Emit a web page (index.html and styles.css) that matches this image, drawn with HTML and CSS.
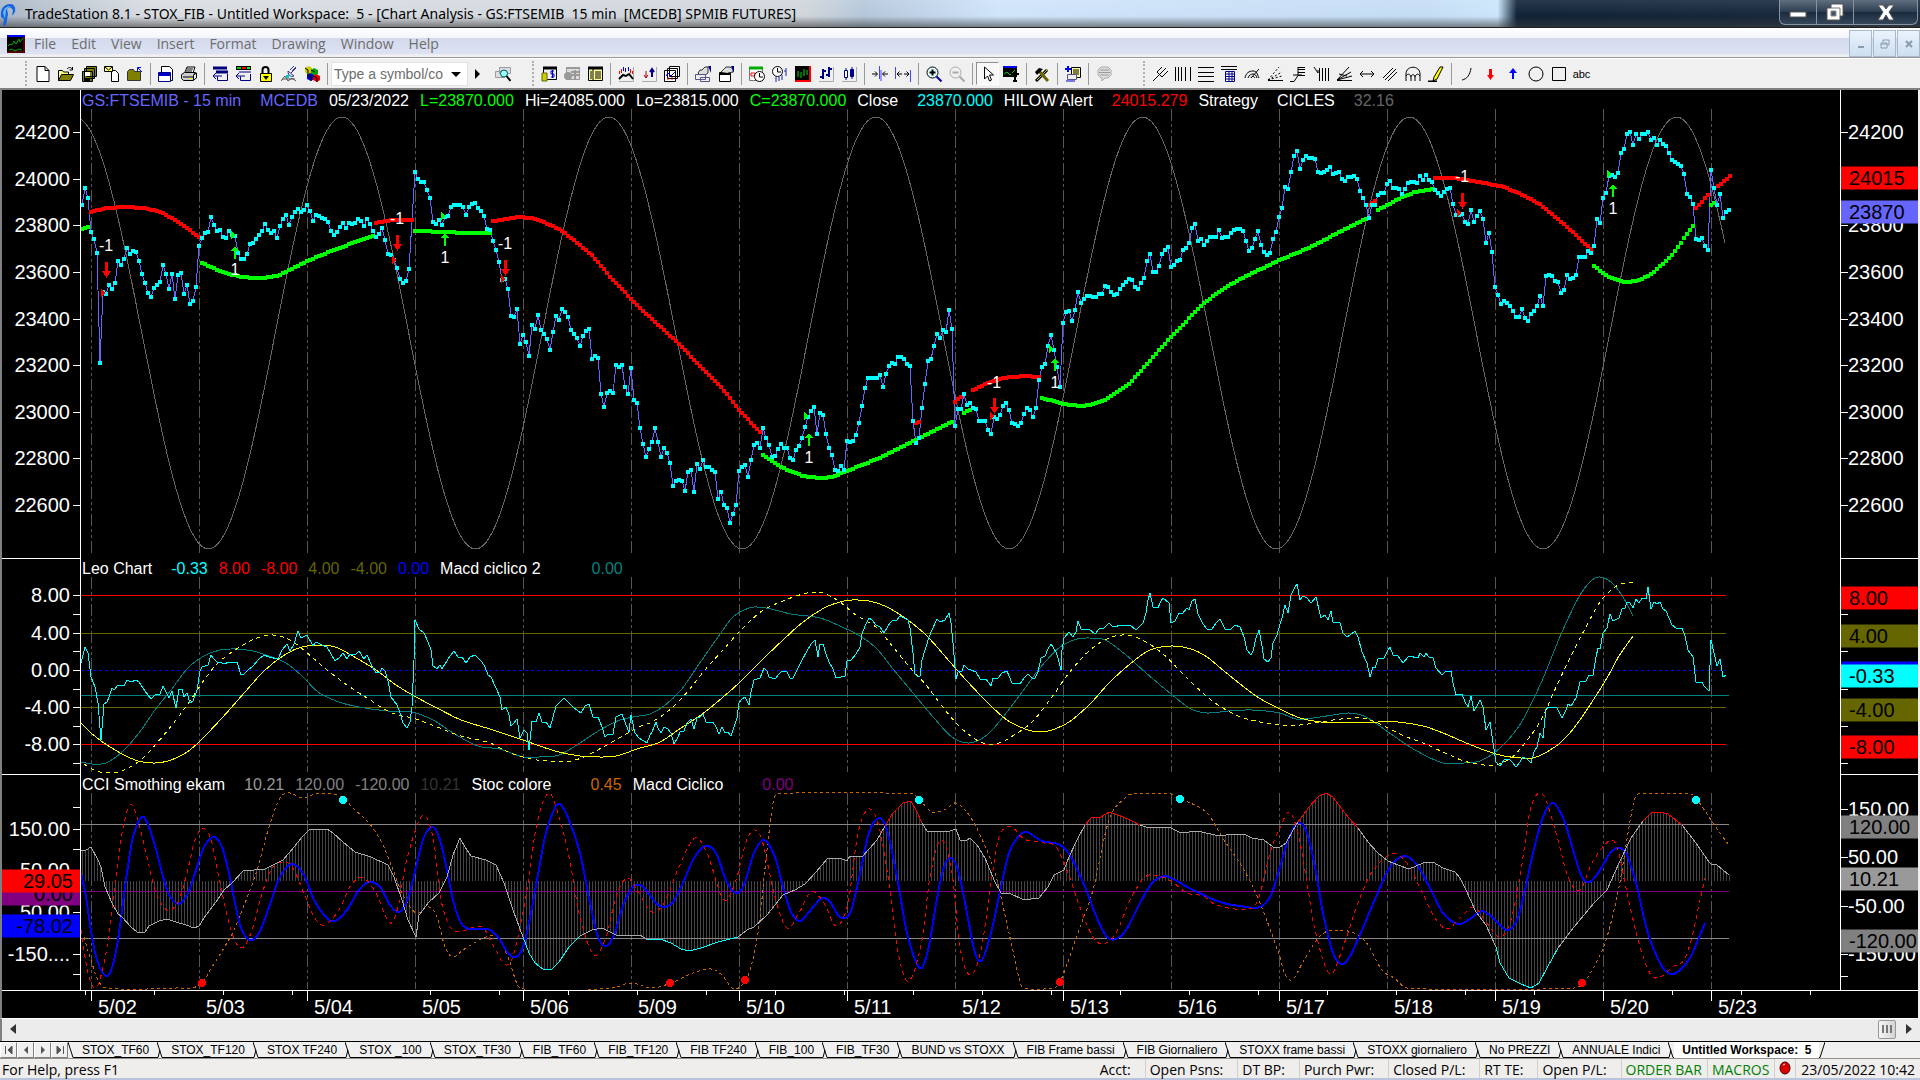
FILE: index.html
```html
<!DOCTYPE html>
<html lang="en">
<head>
    <meta charset="UTF-8">
    <meta name="viewport" content="width=device-width, initial-scale=1.0">
    <title>TradeStation 8.1 - STOX_FIB</title>
    <link rel="stylesheet" href="styles.css">
</head>
<body>
    <header class="titlebar">
        <svg class="app-logo" viewBox="0 0 16 24"><path d="M1 15C0 7 4 2 10 2c4 0 6 3 5 8l-3 4 1-6-3-3-3 2 1 5-2 11-3 1 1-7z" fill="#1464e0"/><path d="M3 11c1-5 4-7 7-7l-4 4-1 9z" fill="#6db4ff"/></svg>
        <h1>TradeStation 8.1 - STOX_FIB - Untitled Workspace:&nbsp; 5 - [Chart Analysis - GS:FTSEMIB&nbsp; 15 min&nbsp; [MCEDB] SPMIB FUTURES]</h1>
        <div class="window-buttons">
            <button aria-label="Minimize"><svg width="18" height="16"><rect x="1" y="8" width="16" height="5" fill="#fff" stroke="#555"/></svg></button>
            <button aria-label="Restore"><svg width="20" height="18"><path d="M6 1h12v12h-3v4H2V5h4z" fill="#fff" stroke="#555"/><path d="M6 5h9v8" fill="none" stroke="#777"/><path d="M6 8h5v5H6z" fill="#456" stroke="#888"/></svg></button>
            <button class="close" aria-label="Close"><svg width="20" height="17"><path d="M2 1h5l3 4 3-4h5l-5 7 5 8h-5l-3-5-3 5H2l5-8z" fill="#fff" stroke="#555"/></svg></button>
        </div>
    </header>

    <nav class="menubar">
        <svg class="doc-icon" viewBox="0 0 18 18"><path d="M0 0h18v18H0z"/><path d="M0 0h18v2H0z" fill="#00f"/><path d="M17 2v15H0" fill="none" stroke="#a00"/><path d="M1 11l2-2 2 1 2-4 2 3 3-5 1 3 3-4M2 15l3-1 3 2 4-2 3 1" fill="none" stroke="#0a0"/></svg>
        <a href="#">File</a>
        <a href="#">Edit</a>
        <a href="#">View</a>
        <a href="#">Insert</a>
        <a href="#">Format</a>
        <a href="#">Drawing</a>
        <a href="#">Window</a>
        <a href="#">Help</a>
        <div class="mdi-buttons">
            <button aria-label="Minimize chart"><svg width="12" height="12"><path d="M3 8h6v2H3z" fill="#8a9bb0"/></svg></button>
            <button aria-label="Restore chart"><svg width="12" height="12"><path d="M4 4V2h6v5H8M2 5h6v5H2zM2 6h6" fill="none" stroke="#8a9bb0"/></svg></button>
            <button aria-label="Close chart"><svg width="12" height="12"><path d="M3 3l6 6M9 3l-6 6" stroke="#8a9bb0" stroke-width="2"/></svg></button>
        </div>
    </nav>

    <div class="toolbar">
        <div class="tool-group">
            <button aria-label="New"><svg viewBox="0 0 16 16"><path d="M2 .5h8l4 4v11H2zM10 .5v4h4" fill="#fff" stroke="#000"/></svg></button>
            <button aria-label="Open"><svg viewBox="0 0 16 16"><path d="M.5 14.500v-10h4l1 1.500h5v2" fill="#ffff80" stroke="#000"/><path d="M.5 14.500l3-6h12l-3 6z" fill="#808000" stroke="#000"/><path d="M9 3c2-2 4-2 5 0M14.500 1v3h-3" fill="none" stroke="#000"/></svg></button>
            <button aria-label="Save all"><svg viewBox="0 0 16 16"><path d="M5.500.5h10v10h-10zM3.500 2.500h10v10h-10zM1.500 5.500h10v10h-10z" fill="#808000" stroke="#000"/><path d="M4 6h5v4H4z" fill="#fff"/><path d="M3 12h6v3H3z"/></svg></button>
            <button aria-label="Send page"><svg viewBox="0 0 16 16"><path d="M7.500 4.500h4l3 3v8h-7z" fill="#fff" stroke="#000"/><path d="M.5.5h8v5h-8z" fill="#ffff80" stroke="#000"/><path d="M1 1l3.500 3L8 1" fill="none" stroke="#000"/></svg></button>
            <button aria-label="Close workspace"><svg viewBox="0 0 16 16"><path d="M.5 14.500v-9l2-2h4l1 2h6v9z" fill="#808000" stroke="#333"/><path d="M15 6l-4-4M10.500 5V1.500H14" fill="none" stroke="#00f"/></svg></button>
            <i class="sep"></i>
            <button aria-label="Window"><svg viewBox="0 0 16 16"><path d="M3.500.5h8l3 3v11h-11z" fill="#fff" stroke="#000"/><path d="M.5 6.500h12v9H.5z" fill="#fff" stroke="#008"/><path d="M1 7h11v3H1z" fill="#00c"/></svg></button>
            <button aria-label="Print"><svg viewBox="0 0 16 16"><path d="M4 6l2-5h8l-2 6" fill="#fff" stroke="#000"/><path d="M6 3h6M5 5h6" stroke="#000"/><path d="M.5 8.500l3-2h11l-2 3v5h-10l-2-2z" fill="#ccc" stroke="#000"/><path d="M2 11h10M12.500 9l3-2v5l-3 2" fill="none" stroke="#000"/><path d="M8 12h3v1H8z" fill="#ff0"/></svg></button>
            <i class="sep"></i>
            <button aria-label="Insert indicator"><svg viewBox="0 0 16 16"><path d="M1 2h14M4 6h12" stroke="#000080" stroke-width="3"/><path d="M15.500 8v6.500h-10v-4M1 10h9M4 7l-3 3 3 3" fill="none" stroke="#000080"/></svg></button>
            <button aria-label="Insert strategy"><svg viewBox="0 0 16 16"><path d="M1 2h15" stroke="#000" stroke-width="4"/><path d="M2 2h4" stroke="#0c0" stroke-width="2"/><path d="M7 2h4" stroke="red" stroke-width="2"/><path d="M12 2h3" stroke="#0f0" stroke-width="2"/><path d="M4 6h12M15.500 8v6.500h-10v-4M1 10h9M4 7l-3 3 3 3" fill="none" stroke="#000080"/></svg></button>
            <button aria-label="Lock"><svg viewBox="0 0 16 16"><path d="M4.500 8V4c0-4 6-4 6 0v4" fill="none" stroke="#000" stroke-width="2"/><path d="M2.500 7.500h11v8h-11z" fill="#ff0" stroke="#000"/><path d="M5 10h6l-3 4z"/></svg></button>
            <button aria-label="Satellite"><svg viewBox="0 0 16 16"><path d="M7 5c0 5 3 6 6 5zM9 4l4-4M11 5l4-4M10 7l5-5" fill="none" stroke="#339"/><path d="M0 15l4-5 3 5M7 15l4-3 4 3M1 13h13" fill="none" stroke="#555"/><path d="M5 9h3v3H5z" fill="#0cc"/></svg></button>
            <button aria-label="Cubes"><svg viewBox="0 0 16 16"><path d="M1 2l4-2 3 2v5L4 9 1 6z" fill="#cc0"/><path d="M7 4l3-2 4 2v4l-3 2-4-2z" fill="#0a0"/><path d="M3 9l3-2 4 2v4l-3 2-4-2z" fill="#00c"/><path d="M9 10l3-2 4 2v4l-3 2-4-2z" fill="#e00"/><path d="M1 2l3 2v5M3 9l4 2v4M9 10l4 2v4M7 4l4 2" fill="none" stroke="#000"/></svg></button>
            <i class="sep"></i>
            <div class="symbol-box">
                <input type="text" aria-label="Symbol" value="Type a symbol/co">
                <button aria-label="Symbol list"><svg viewBox="0 0 16 16"><path d="M3 6h10l-5 5z"/></svg></button>
            </div>
            <button class="go" aria-label="Go"><svg viewBox="0 0 16 16"><path d="M5 3l5 5-5 5z"/></svg></button>
            <button class="find" aria-label="Find symbol"><svg viewBox="0 0 16 16"><path d="M.5 5.500h9v6h-9zM4.500 1.500h11v6h-11z" fill="#ddd" stroke="#99a"/><circle cx="9" cy="7.500" r="3.500" fill="#9ff" stroke="#055"/><path d="M11.500 10l4 5" stroke="#000" stroke-width="2"/></svg></button>
        </div>
        <div class="tool-group second">
            <button aria-label="Account"><svg viewBox="0 0 16 16"><path d="M2.500 1.500h13v12h-13z" fill="#eee" stroke="#000"/><path d="M2 2h14" stroke="#000" stroke-width="3"/><path d="M13 5h-3v3h3v3h-3M11.500 4v8" fill="none" stroke="#00c"/><path d="M1 7h5v8H1z" fill="#cc0" stroke="#660"/></svg></button>
            <button aria-label="Order"><svg viewBox="0 0 16 16"><path d="M2.500 1.500h13v12h-13z" fill="#ddd" stroke="#999"/><path d="M2 2h14M7 6h8M7 9h8M11 4v9" stroke="#999" stroke-width="2"/><circle cx="4" cy="10" r="4" fill="#999"/></svg></button>
            <button aria-label="Grid"><svg viewBox="0 0 16 16"><path d="M1.500 1.500h14v13h-14z" fill="#ff9" stroke="#000"/><path d="M1 2h15" stroke="#000" stroke-width="3"/><path d="M6 3v12M3 6h2M3 8h2M3 10h2M3 12h2M8 6h6M8 8h6M8 10h6M8 12h6" stroke="#000"/></svg></button>
            <i class="sep"></i>
            <button aria-label="Indicator"><svg viewBox="0 0 16 16"><path d="M15.500 1v14.500H1" fill="none" stroke="#aaa"/><path d="M1 13l4-4 3 1 3-2 4 5" fill="none" stroke="#000" stroke-width="2"/><path d="M1.500 5v3M3.500 3v4M12.500 3v4M14.500 5v3" stroke="red"/><path d="M5.500 1v4M7.500 2v4M10.500 1v4" stroke="#00f"/></svg></button>
            <button aria-label="Signals"><svg viewBox="0 0 16 16"><path d="M15.500 1v14.500H1" fill="none" stroke="#aaa"/><path d="M5 5v7M3 9l2 3 2-3" fill="none" stroke="#a00" stroke-width="1"/><path d="M11 11V3M9 6l2-3 2 3" fill="none" stroke="#008" stroke-width="2"/></svg></button>
            <button aria-label="Analysis"><svg viewBox="0 0 16 16"><path d="M5.500.5h10v10h-10zM3.500 2.500h10v10h-10zM.5 4.500h11v11H.5z" fill="#fff" stroke="#000"/><path d="M2 10l2-3 3 3 4-4" fill="none" stroke="#00f"/><path d="M4 11v3M8 11v3" stroke="red"/></svg></button>
            <i class="sep"></i>
            <button aria-label="Format"><svg viewBox="0 0 16 16"><path d="M3 7l2-3h2l3-3h3v6l-3 2H5z" fill="#ddd" stroke="#333"/><path d="M13 0h3v7z" fill="#008"/><path d="M.5 8.500h10v5H.5zM5.500 11.500h9v4h-9z" fill="#eee" stroke="#558"/></svg></button>
            <button aria-label="Properties"><svg viewBox="0 0 16 16"><path d="M1.500 6.500h11v9h-11z" fill="#fff" stroke="#000"/><path d="M1 7h12v2H1z"/><path d="M3 6l5-5h4l3 2v3l-5 1" fill="#ddd" stroke="#333"/><path d="M13 0h3v7z" fill="#008"/></svg></button>
            <i class="sep"></i>
            <button aria-label="Calendar"><svg viewBox="0 0 16 16"><path d="M.5 2.500h13v12H.5z" fill="#fff" stroke="#777"/><path d="M0 2h14" stroke="#0a0" stroke-width="3"/><path d="M2 7h4v3H2z" fill="none" stroke="red"/><circle cx="10.500" cy="10.500" r="5" fill="#fff" stroke="#000"/><path d="M10.500 7v4H14" fill="none" stroke="#000"/></svg></button>
            <button aria-label="Interval"><svg viewBox="0 0 16 16"><circle cx="5.500" cy="5.500" r="5" fill="#fff" stroke="#000"/><path d="M5.500 2v4H9" fill="none" stroke="#000"/><path d="M4 11v5M7 11v4M10 9v5M14 2v8M12 5h2" stroke="#22a"/></svg></button>
            <button aria-label="Chart colours"><svg viewBox="0 0 16 16"><path d="M0 0h16v16H0z"/><path d="M0 15h15V0" fill="none" stroke="red" stroke-width="2"/><path d="M3 5v6M6 6v6M9 3v7M12 4v5" stroke="#0d0"/></svg></button>
            <button aria-label="Bar chart"><svg viewBox="0 0 16 16"><path d="M15.500 1v14.500H1" fill="none" stroke="#aaa"/><path d="M5 3v10M2 11h3M5 5h3M11 1v10M8 9h3M11 3h3" stroke="#000080" stroke-width="2"/></svg></button>
            <button aria-label="Candlestick"><svg viewBox="0 0 16 16"><path d="M15.500 1v14.500H1" fill="none" stroke="#aaa"/><path d="M3.500 4.500h3v7h-3z" fill="#fff" stroke="#008"/><path d="M9.500 3.500h3v7h-3z" fill="#008" stroke="#008"/><path d="M5 2v2M11 1v12M5 12v2" stroke="#008"/></svg></button>
            <i class="sep"></i>
            <button aria-label="Narrow bars"><svg viewBox="0 0 16 16"><path d="M0 8h5M3 5.500L5.500 8 3 10.500M16 8h-5M13 5.500L10.500 8l2.500 2.500" fill="none" stroke="#000"/><path d="M7.500 0v13M9 4v11" stroke="#44f"/></svg></button>
            <button aria-label="Widen bars"><svg viewBox="0 0 16 16"><path d="M2 8h5M4.500 5.500L2 8l2.500 2.500M9 8h5M11.500 5.500L14 8l-2.500 2.500" fill="none" stroke="#000"/><path d="M.5 1v12M15.500 4v12" stroke="#44f"/></svg></button>
            <i class="sep"></i>
            <button aria-label="Zoom in"><svg viewBox="0 0 16 16"><circle cx="6.500" cy="6.500" r="5.500" fill="#dff" stroke="#000"/><path d="M3.500 6.500h6M6.500 3.500v6" stroke="#000" stroke-width="2"/><path d="M10.500 10.500l5 5" stroke="#00a" stroke-width="2"/></svg></button>
            <button aria-label="Zoom out"><svg viewBox="0 0 16 16"><circle cx="6.500" cy="6.500" r="5.500" fill="none" stroke="#aaa"/><path d="M3.500 6.500h6M10.500 10.500l5 5" stroke="#aaa" stroke-width="2"/></svg></button>
            <i class="sep"></i>
            <button class="pressed" aria-label="Pointer"><svg viewBox="0 0 16 16"><path d="M4.500 1v12l3-3 2 5 2-1-2-5h4z" fill="#fff" stroke="#000"/></svg></button>
            <button aria-label="Text tool"><svg viewBox="0 0 16 16"><path d="M0 0h14v11H0z"/><path d="M0 1h14" stroke="#00f" stroke-width="2"/><path d="M1 8l3-2 3 3 5-5" fill="none" stroke="#0c0"/><path d="M8 8h8M12 8v8M10 15h4" stroke="#000" stroke-width="2"/></svg></button>
            <i class="sep"></i>
            <button aria-label="Tools"><svg viewBox="0 0 16 16"><path d="M2 15L13 4" stroke="#000" stroke-width="3"/><path d="M3 14L14 3" stroke="#cc0"/><path d="M5 5l9 10" stroke="#660" stroke-width="3"/><path d="M1 6l4-4 4 1-4 4-2 2z"/></svg></button>
            <i class="sep"></i>
            <button aria-label="Add window"><svg viewBox="0 0 16 16"><path d="M6.500 1.500h9v10h-9z" fill="#ff9" stroke="#000"/><path d="M8 4h6M8 6h6M8 8h6" stroke="#000"/><path d="M2.500 8.500h9v5h-9z" fill="#eee" stroke="#558"/><path d="M3 0v6M0 3h6" stroke="#00f" stroke-width="2"/><path d="M1 15h9" stroke="#00c"/></svg></button>
            <i class="sep"></i>
            <button aria-label="Comment"><svg viewBox="0 0 16 16"><path d="M5 1h7l3 3v5l-3 3H9l-3 3v-3H5L2 9V4z" fill="#ddd" stroke="#aaa"/><path d="M4 4h9M3 6.500h11M4 9h9" stroke="#999"/></svg></button>
        </div>
        <div class="tool-group third">
            <button aria-label="Andrews pitchfork"><svg viewBox="0 0 16 16"><path d="M1 15l6-6M5 6l5 5M5 6l5-5M7.500 8.500L14 2M10 11l6-6" fill="none" stroke="#000"/></svg></button>
            <button aria-label="Vertical cycles"><svg viewBox="0 0 16 16"><path d="M.5 1v14M3.500 1v14M6.500 1v14M10.500 1v14M15.500 1v14" stroke="#000"/></svg></button>
            <button aria-label="Horizontal lines"><svg viewBox="0 0 16 16"><path d="M0 1.500h16M0 6.500h16M0 10.500h16M0 15.500h16" stroke="#000"/></svg></button>
            <button aria-label="Retracement"><svg viewBox="0 0 16 16"><path d="M0 .5h16M0 3.500h16" stroke="#000"/><path d="M4.500 5.500h9v10h-9z" fill="#fff" stroke="#008"/><path d="M5 8h8M5 10.500h8M5 13h8M8 6v9M11 6v9" stroke="#008"/></svg></button>
            <button aria-label="Speed arcs"><svg viewBox="0 0 16 16"><path d="M1 12c1-5 4-7 8-7s4 3 6 7M4 12c1-3 3-4 5-4s3 1 4 4M7 12c1-2 3-2 4 0M7 12l8-9" fill="none" stroke="#000"/></svg></button>
            <button aria-label="Speed fan"><svg viewBox="0 0 16 16"><path d="M1 14.500h15" stroke="#000"/><path d="M1 14L12 1M1 14l14-8M1 14l14-4" stroke="#000" stroke-dasharray="2 2"/></svg></button>
            <button aria-label="Extension"><svg viewBox="0 0 16 16"><path d="M0 15.500h4l4-6V1M3 9h9M8 1.500h7M8 3.500h7M8 6.500h7M8 9.500h7" fill="none" stroke="#000"/></svg></button>
            <button aria-label="Time extension"><svg viewBox="0 0 16 16"><path d="M1 1l4 6M5 7V4M6.500 2v13M9.500 2v13M12.500 2v13M15.500 2v13" stroke="#000"/></svg></button>
            <button aria-label="Gann fan"><svg viewBox="0 0 16 16"><path d="M1 14.500h15M1 14L13 1M1 14l14-8M1 14l15-4M3 8l8 2" fill="none" stroke="#000"/></svg></button>
            <button aria-label="Horizontal extend"><svg viewBox="0 0 16 16"><path d="M1 8h14M4 5L1 8l3 3M12 5l3 3-3 3" fill="none" stroke="#000"/></svg></button>
            <button aria-label="Parallel lines"><svg viewBox="0 0 16 16"><path d="M1 12L11 2M3 14L14 3M6 15l9-9" stroke="#000"/></svg></button>
            <button aria-label="Arcs"><svg viewBox="0 0 16 16"><path d="M1 15V8c0-9 14-9 14 0v7M1 10c2-3 4-2 5 1 0-3 4-3 4 0 1-3 3-4 5-1M6 11v4M10 11v4" fill="none" stroke="#000"/></svg></button>
            <button aria-label="Pencil"><svg viewBox="0 0 16 16"><path d="M6 11l6-10h3L9 13l-4 2z" fill="#ff0" stroke="#000"/><path d="M0 15.500h9" stroke="#000" stroke-width="2"/></svg></button>
            <i class="sep"></i>
            <button aria-label="Curve"><svg viewBox="0 0 16 16"><path d="M3 14c5-1 8-5 9-12" fill="none" stroke="#000"/></svg></button>
            <button aria-label="Down arrow"><svg viewBox="0 0 16 16"><path d="M7 3h3v6h2l-3.500 5L5 9h2z" fill="red"/></svg></button>
            <button aria-label="Up arrow"><svg viewBox="0 0 16 16"><path d="M7 13h2V7h3L8 2 4 7h3z" fill="#00f"/></svg></button>
            <button aria-label="Ellipse"><svg viewBox="0 0 16 16"><circle cx="8" cy="8" r="7" fill="none" stroke="#000"/></svg></button>
            <button aria-label="Rectangle"><svg viewBox="0 0 16 16"><path d="M1.500 1.500h13v13h-13z" fill="none" stroke="#000"/></svg></button>
            <button class="abc">abc</button>
        </div>
    </div>

    <main class="chart">
        <div class="axis left" id="left1"></div>
        <section class="plot">
            <svg id="plot1" viewBox="81 90 1759 469" preserveAspectRatio="none"></svg>
            <div class="legend first">
                <span class="violet">GS:FTSEMIB - 15 min</span>
                <span class="violet val">MCEDB</span>
                <span>05/23/2022</span>
                <span class="lime">L=23870.000</span>
                <span>Hi=24085.000</span>
                <span>Lo=23815.000</span>
                <span class="lime">C=23870.000</span>
                <span>Close</span>
                <span class="cyan val">23870.000</span>
                <span>HILOW Alert</span>
                <span class="red val">24015.279</span>
                <span>Strategy</span>
                <span class="val">CICLES</span>
                <span class="dim val">32.16</span>
            </div>
            <div class="notes" id="notes"></div>
        </section>
        <div class="axis right" id="right1"></div>

        <div class="axis left" id="left2"></div>
        <section class="plot">
            <svg id="plot2" viewBox="81 559 1759 216" preserveAspectRatio="none"></svg>
            <div class="legend">
                <span>Leo Chart</span>
                <span class="cyan val">-0.33</span>
                <span class="red">8.00</span>
                <span class="red">-8.00</span>
                <span class="olive">4.00</span>
                <span class="olive">-4.00</span>
                <span class="blue">0.00</span>
                <span>Macd ciclico 2</span>
                <span class="teal farther">0.00</span>
            </div>
        </section>
        <div class="axis right" id="right2"></div>

        <div class="axis left last" id="left3"></div>
        <section class="plot">
            <svg id="plot3" viewBox="81 775 1759 215" preserveAspectRatio="none"></svg>
            <div class="legend">
                <span>CCI Smothing ekam</span>
                <span class="silver val">10.21</span>
                <span class="gray">120.00</span>
                <span class="gray">-120.00</span>
                <span class="dark">10.21</span>
                <span>Stoc colore</span>
                <span class="orange far">0.45</span>
                <span>Macd Ciclico</span>
                <span class="purple far">0.00</span>
            </div>
        </section>
        <div class="axis right last" id="right3"></div>

        <div class="dates" id="dates"></div>
    </main>

    <div class="scrollbar">
        <button aria-label="Scroll left"><svg width="6" height="10"><path d="M6 0v10L0 5z" fill="#333"/></svg></button>
        <div class="thumb"><i></i><i></i><i></i></div>
        <button aria-label="Scroll right"><svg width="6" height="10"><path d="M0 0v10l6-5z" fill="#333"/></svg></button>
    </div>

    <nav class="tabs" id="tabs">
        <button class="nav" aria-label="First"><svg width="10" height="10"><path d="M1.500 1v8M8 1v8L4 5z" fill="#555" stroke="#555"/></svg></button>
        <button class="nav" aria-label="Previous"><svg width="10" height="10"><path d="M7 1v8L3 5z" fill="#555"/></svg></button>
        <button class="nav" aria-label="Next"><svg width="10" height="10"><path d="M3 1v8l4-4z" fill="#555"/></svg></button>
        <button class="nav" aria-label="Last"><svg width="10" height="10"><path d="M8.500 1v8M2 1v8l4-4z" fill="#555" stroke="#555"/></svg></button>
    </nav>

    <footer class="status">
        <span class="help">For Help, press F1</span>
        <span>Acct:</span>
        <span>Open Psns:</span>
        <span>DT BP:</span>
        <span>Purch Pwr:</span>
        <span>Closed P/L:</span>
        <span>RT TE:</span>
        <span>Open P/L:</span>
        <span class="on">ORDER BAR</span>
        <span class="on">MACROS</span>
        <span class="led"><svg width="12" height="14"><ellipse cx="6" cy="7" rx="5" ry="6" fill="#d00" stroke="#300"/><path d="M4 4l2-1" stroke="#fff"/></svg></span>
        <span class="clock">23/05/2022 10:42</span>
    </footer>

    <script src="chart.js"></script>
</body>
</html>
```
FILE: styles.css
```css
* {
    box-sizing: border-box;
}

body {
    margin: 0;
    height: 100vh;
    display: flex;
    flex-direction: column;
    overflow: hidden;
    background: #f0f0f0;
    font-family: "Open Sans", "Noto Sans", sans-serif;
    font-size: 14px;
    color: #000;
}

button {
    margin: 0;
    padding: 0;
    border: 0;
    background: none;
    font: inherit;
    color: inherit;
    display: flex;
    align-items: center;
    justify-content: center;
}

/* title bar */
.titlebar {
    flex: none;
    height: 28px;
    display: flex;
    align-items: center;
    background:
        linear-gradient(rgba(255, 255, 255, 0.1), rgba(255, 255, 255, 0) 60%, rgba(60, 60, 60, 0.6)),
        linear-gradient(90deg, #a9b6c4 0%, #d9dde2 8%, #cfd5db 42%, #b4c7da 45%, #cfe4fa 52%, #c4dcf4 74%, #cbe5fb 78%, #0f2236 79%, #1a2a3e 100%);
    border-bottom: 1px solid #222;
}

.app-logo {
    width: 16px;
    height: 24px;
    margin: 0 9px 0 0;
}

.titlebar h1 {
    flex: 1;
    margin: 0;
    font-family: "Noto Sans", sans-serif;
    font-size: 14px;
    font-weight: normal;
    white-space: nowrap;
}

.window-buttons {
    display: flex;
    align-self: flex-start;
    height: 25px;
    margin-right: 2px;
    border: 1px solid #8593a2;
    border-top: 0;
    border-radius: 0 0 6px 6px;
    background: linear-gradient(#5f6f80, #2c3d50 50%, #1b2b3e 50%, #35465a);
}

.window-buttons button {
    width: 37px;
    border-right: 1px solid #8593a2;
}

.window-buttons .close {
    width: 63px;
    border-right: 0;
}

/* menu bar */
.menubar {
    flex: none;
    height: 30px;
    display: flex;
    align-items: center;
    gap: 15px;
    padding: 2px 0 0 7px;
    background: linear-gradient(#fff, #f3f5fb 35%, #d4daec 36%, #dde3f3 90%, #f0f0f0 92%);
    border-bottom: 1px solid #9a9a9a;
}

.menubar a {
    color: #6d6d6d;
    text-decoration: none;
}

.doc-icon {
    width: 18px;
    height: 18px;
    margin-right: -6px;
}

.mdi-buttons {
    display: flex;
    gap: 1px;
    height: 27px;
    margin-left: auto;
}

.mdi-buttons button {
    width: 23px;
    border: 1px solid #a9b8cc;
    background: linear-gradient(#eaf3fb, #cddff0);
}

/* toolbar */
.toolbar {
    flex: none;
    height: 32px;
    display: flex;
    align-items: center;
    padding-left: 25px;
    background: #f0f0f0;
    border-top: 1px solid #fff;
    border-bottom: 2px solid #808080;
}

.tool-group {
    display: flex;
    align-items: center;
    height: 25px;
    padding-left: 4px;
    border-left: 2px dotted #b0b0b0;
}

.tool-group.second {
    margin-left: 18px;
    padding-left: 3px;
}

.tool-group.third {
    margin-left: 28px;
    padding-left: 3px;
}

.tool-group button {
    width: 23px;
    height: 23px;
}

.tool-group svg {
    width: 16px;
    height: 16px;
}

.tool-group .pressed {
    background: #f8f8f8;
    border: 1px solid;
    border-color: #909090 #fff #fff #909090;
}

.tool-group .abc {
    font: 11px "Liberation Sans", sans-serif;
}

.sep {
    width: 1px;
    height: 22px;
    margin: 0 3px 0 4px;
    background: #999;
}

.symbol-box {
    display: flex;
    align-items: center;
    width: 137px;
    height: 24px;
    background: #fff;
    border: 1px solid #e2e2e2;
}

.symbol-box input {
    flex: 1;
    min-width: 0;
    padding: 0 0 0 2px;
    border: 0;
    background: none;
    color: #6d6d6d;
    font: 14px "Liberation Sans", sans-serif;
}

.tool-group .go {
    width: 19px;
}

.tool-group .find {
    margin-left: 4px;
}

/* chart window */
.chart {
    flex: 1;
    min-height: 0;
    display: grid;
    grid-template-columns: 79px 1fr 78px;
    grid-template-rows: 469fr 216fr 215fr 28px;
    background: #000;
    border-left: 2px solid #808080;
    border-right: 2px solid #f0f0f0;
    color: #fff;
    font: 16px/20px "Liberation Sans", Arial, sans-serif;
}

.plot {
    display: grid;
    min-width: 0;
    min-height: 0;
}

.plot > * {
    grid-area: 1 / 1;
    min-height: 0;
    width: 100%;
    height: 100%;
}

.plot svg {
    fill: none;
    shape-rendering: crispEdges;
}

.legend {
    display: flex;
    align-items: flex-start;
    gap: 11px;
    padding-left: 1px;
    white-space: nowrap;
}

.legend.first {
    padding-top: 1px;
}

.legend .val {
    margin-left: 8px;
}

.legend .far {
    margin-left: 28px;
}

.legend .farther {
    margin-left: 40px;
}

.violet { color: #6666ff; }
.lime { color: #00ff00; }
.cyan { color: #00ffff; }
.red { color: #ff0000; }
.dim { color: #666666; }
.olive { color: #666600; }
.blue { color: #0000ff; }
.teal { color: #008080; }
.silver { color: #999999; }
.gray { color: #808080; }
.dark { color: #333333; }
.orange { color: #cc6600; }
.purple { color: #800080; }

.notes {
    position: relative;
}

.notes span {
    position: absolute;
    transform: translate(-50%, -50%);
}

/* price scales: every label hangs on its own value */
.axis {
    position: relative;
    overflow: hidden;
    font-size: 20px;
    line-height: 24px;
    border-bottom: 1px solid #fff;
}

.axis.last {
    border-bottom: 0;
}

.axis.left {
    border-right: 1px solid #fff;
    text-align: right;
}

.axis.right {
    border-left: 1px solid #fff;
}

.axis span {
    position: absolute;
    left: 0;
    right: 0;
    height: 24px;
    transform: translateY(-50%);
}

.left span {
    padding-right: 10px;
}

.right span {
    padding-left: 7px;
}

.axis .tick::before {
    content: "";
    position: absolute;
    top: 12px;
    width: 7px;
    height: 1px;
    background: #fff;
}

.left .tick::before {
    right: 0;
}

.right .tick::before {
    left: 0;
}

.axis .box {
    color: #000;
    height: 23px;
    line-height: 23px;
}

.left .box {
    padding-right: 7px;
}

.right .box {
    padding-left: 8px;
}

.dates {
    grid-column: 1 / -1;
    position: relative;
    border-top: 1px solid #fff;
    font-size: 20px;
    line-height: 32px;
}

.dates span {
    position: absolute;
    top: 0;
}

.dates i {
    position: absolute;
    top: 0;
    width: 1px;
    height: 4px;
    background: #fff;
}

.dates i.day {
    height: 10px;
}

/* scroll bar */
.scrollbar {
    flex: none;
    height: 23px;
    display: flex;
    align-items: center;
    padding: 0 8px 2px;
    gap: 10px;
    background: #ececec;
    border-top: 1px solid #fff;
    border-left: 2px solid #808080;
}

.thumb {
    width: 18px;
    height: 19px;
    margin-left: auto;
    display: flex;
    align-items: center;
    justify-content: center;
    gap: 2px;
    border: 1px solid #979797;
    border-radius: 2px;
    background: linear-gradient(90deg, #f5f5f5, #d4d4d4);
}

.thumb i {
    width: 2px;
    height: 8px;
    background: #777;
}

/* workspace tabs */
.tabs {
    flex: none;
    height: 18px;
    display: flex;
    align-items: stretch;
    background: #f0f0f0;
    border-top: 1px solid #000;
    border-bottom: 1px solid #909090;
    font: 12px "Liberation Sans", Arial, sans-serif;
    white-space: nowrap;
}

.tabs .nav {
    width: 17px;
    border: 1px solid;
    border-color: #fff #808080 #808080 #fff;
}

.tabs .tab {
    padding: 0 8px;
    border-bottom: 1px solid #000;
}

.tabs .active {
    background: #fff;
    border-bottom-color: #fff;
    font-weight: bold;
}

.tabs .edge {
    flex: none;
    width: 6px;
    height: 16px;
}

/* status bar */
.status {
    flex: none;
    height: 21px;
    display: flex;
    align-items: stretch;
    line-height: 21px;
    background: #f0eded;
    border-bottom: 2px solid #b8c4dc;
    white-space: nowrap;
}

.status span {
    padding: 0 14px 0 4px;
    border-right: 1px solid #d2cfcf;
}

.status .help {
    flex: 1;
    padding-left: 2px;
    border-right: 0;
}

.status .on {
    padding: 0 5px 0 4px;
    color: #008000;
}

.status .led {
    padding: 0 4px;
}

.status .clock {
    padding: 0 5px;
    border-right: 0;
}
```
FILE: chart.js
```js
const BAR = 3;
const FIRST = 82;
const LAST_X = 1729;
const DAYS = ['5/02', '5/03', '5/04', '5/05', '5/06', '5/09', '5/10', '5/11', '5/12', '5/13', '5/16', '5/17', '5/18', '5/19', '5/20', '5/23'];
const dayX = k => 91 + 108 * k;

// close of every 15 min bar, one row per session
const closes = `205 188 198
232 239 253 363 292 294 285 289 283 261 265 259 248 254 251 252 261 274 283 293 297 288 285 282 265 274 289 274 299 275 273 294 285 304 301 287
246 238 233 232 217 225 231 230 237 238 231 235 236 253 259 259 254 244 243 239 235 231 224 230 233 231 238 226 219 215 225 217 212 209 212 210
205 211 221 215 216 218 219 222 231 235 232 227 223 228 223 224 223 219 221 226 219 224 231 237 234 228 240 254 255 260 268 279 283 281 269
172 179 182 182 190 198 222 224 220 225 217 216 207 205 205 205 207 215 207 204 203 208 211 216 229 230 241 250 262 280 279 289 316 317 309 344
335 342 356 325 329 315 330 334 339 350 332 316 320 309 312 317 330 334 338 346 336 331 329 359 356 358 394 407 393 391 393 365 367 365 387 394
368 400 403 428 444 457 449 442 428 442 457 448 453 463 486 481 480 481 491 472 470 492 464 469 460 467 467 470 472 499 492 505 508 523 514 505
471 467 465 477 460 445 443 448 428 438 445 457 456 449 444 448 448 458 460 450 446 438 427 417 411 407 434 413 415 434 448 455 470 471 466 470
441 442 441 435 423 406 388 378 378 378 378 375 387 374 366 363 364 357 357 359 364 366 421 443 438 408 384 361 359 346 334 338 330 332 310 329
426 409 409 394 405 403 408 409 421 421 421 430 434 417 419 415 406 403 410 423 424 426 423 414 408 410 417 408 380 367 364 346 335 350 367 387
323 312 311 321 310 292 303 299 296 296 297 297 294 294 286 287 292 295 294 289 285 282 279 280 287 289 283 278 261 254 272 272 266 254 250 247
267 265 261 260 250 248 243 228 224 241 239 245 241 237 237 237 230 238 237 237 233 230 229 229 231 241 251 248 239 231 245 252 255 253 239 232
217 208 187 189 172 156 151 169 160 156 158 158 159 172 173 172 170 167 174 173 172 179 181 177 177 176 179 191 198 205 218 205 205 195 193 193
184 181 188 188 189 194 189 183 182 182 183 176 180 175 180 182 190 193 196 192 189 188 204 215 215 214 222 224 210 222 216 211 219 243 233 252
287 295 304 301 303 306 311 317 317 309 318 321 314 311 306 296 306 276 275 276 281 282 293 290 275 279 278 275 257 257 257 251 253 246 219 223
198 193 176 175 177 173 153 149 134 132 145 134 139 134 134 132 140 138 145 140 144 146 153 160 162 164 166 174 194 197 204 239 240 238 246 250
170 188 205 194 218 212 210`;

// HILOW trend pieces
const hilow = [
    ['red', '91,212 106,208 124,207 143,208 157,211 163,213 180,223 199,237'],
    ['lime', '82,229 88,227'],
    ['lime', '202,263 220,271 237,276 253,278 265,278 280,275 307,261 339,248 373,236'],
    ['red', '376,223 392,220 412,220'],
    ['lime', '415,231 449,232 461,233 490,233'],
    ['red', '493,221 506,219 518,217 531,218 543,222 561,230 576,242 592,255 612,279 640,308 677,342 701,367 722,388 739,410 761,433'],
    ['lime', '763,455 783,468 803,476 820,478 832,477 847,471 877,459 901,447 911,442 922,437 953,421'],
    ['red', '916,423 921,422'],
    ['red', '955,402 962,396'],
    ['lime', '964,413 971,409'],
    ['red', '973,390 987,383 1003,378 1024,376 1039,377'],
    ['lime', '1042,398 1064,404 1079,406 1091,405 1105,400 1128,385 1146,365 1171,337 1203,304 1220,291 1240,279 1280,260 1313,246 1341,231 1367,218'],
    ['red', '1369,205 1376,200'],
    ['lime', '1378,210 1402,197 1415,192 1433,189'],
    ['red', '1435,178 1456,178 1480,182 1504,187 1525,196 1541,205 1566,226 1592,250'],
    ['lime', '1594,266 1607,276 1625,282 1637,281 1653,273 1672,255 1693,226'],
    ['red', '1696,208 1709,194'],
    ['lime', '1711,205 1715,202'],
    ['red', '1718,186 1730,176']
];

// entries: x, arrow top, label centre, small flag x / y
const sells = [[107, 262, 246, 102, 293], [398, 235, 219, 393, 260], [506, 260, 244, 502, 279], [995, 398, 383, 991, 416], [1463, 193, 177, 1458, 213]];
const buys = [[235, 246, 270, 232, 235], [445, 233, 258, 442, 216], [809, 433, 458, 805, 416], [1055, 358, 383, 1050, 349], [1613, 184, 209, 1608, 174]];

const leo = '81,663 85,647 88,653 91,677 95,687 98,703 101,740 104,704 107,702 109,697 112,688 114,690 118,685 124,686 127,680 131,682 136,680 139,682 145,691 151,699 155,695 160,694 163,686 169,698 172,691 176,708 179,689 182,689 184,697 187,693 190,703 193,701 197,690 200,671 202,667 208,665 211,655 214,659 217,662 220,662 224,664 229,662 237,662 241,675 244,674 248,670 253,666 259,659 264,655 269,657 278,659 282,650 287,644 290,651 294,644 298,631 301,638 307,635 313,646 316,642 322,645 327,647 335,661 340,657 343,653 347,659 350,654 355,655 359,651 364,659 367,655 371,664 376,673 380,672 382,668 385,671 388,681 391,697 397,705 400,713 403,723 407,728 410,722 412,707 414,660 415,620 419,629 424,633 428,642 431,650 433,666 437,669 440,665 442,669 445,664 450,656 454,651 458,657 462,657 466,663 470,657 475,655 482,662 485,667 488,675 491,677 496,688 500,697 502,710 506,707 509,715 511,726 514,723 517,719 520,738 524,730 527,733 529,750 532,721 536,722 539,713 542,722 546,722 550,728 553,717 556,706 560,702 564,698 569,703 573,707 578,711 581,713 585,706 589,704 593,717 598,717 602,727 605,737 608,734 613,734 616,717 622,714 626,725 629,732 631,715 635,733 639,738 647,743 650,735 652,732 656,722 658,728 661,733 664,727 668,729 671,733 674,744 678,737 680,732 684,731 687,723 691,719 694,729 697,718 700,717 703,714 706,722 713,722 716,727 719,734 722,727 725,733 728,732 731,736 734,727 737,718 739,703 742,699 745,697 749,705 751,692 754,680 757,679 760,678 764,668 767,671 769,677 775,679 779,674 782,671 787,672 790,678 793,678 797,670 801,662 807,651 811,644 815,640 818,657 820,644 823,644 826,654 829,662 833,669 836,678 841,677 845,676 847,661 851,660 856,654 860,647 862,634 865,626 869,618 872,620 876,625 880,627 884,633 887,628 890,623 893,620 896,621 900,616 904,618 908,620 910,628 913,653 915,674 918,677 920,676 922,660 926,647 929,637 932,630 937,619 940,622 945,620 949,613 951,623 953,643 956,679 958,672 962,671 964,665 968,669 971,670 976,672 980,679 986,679 991,686 993,678 998,678 1002,673 1007,671 1009,676 1012,683 1020,684 1024,678 1028,674 1032,678 1035,678 1038,672 1041,658 1045,656 1048,649 1051,644 1056,652 1058,658 1061,670 1062,650 1064,638 1069,632 1073,637 1076,632 1078,621 1081,629 1089,629 1095,634 1099,629 1104,628 1109,623 1113,627 1122,625 1130,625 1136,630 1143,623 1146,613 1148,600 1150,593 1153,607 1158,608 1160,603 1163,598 1169,603 1171,623 1175,621 1179,613 1182,614 1187,608 1189,610 1192,601 1195,599 1198,614 1203,624 1207,629 1212,629 1216,623 1220,619 1225,629 1231,629 1235,625 1240,627 1244,637 1247,650 1251,655 1253,651 1256,638 1259,630 1262,646 1264,659 1268,662 1271,658 1273,643 1277,635 1280,624 1282,618 1285,605 1288,613 1291,595 1295,587 1297,584 1300,600 1303,596 1307,598 1311,603 1316,597 1321,618 1325,615 1328,620 1331,611 1333,622 1340,623 1343,633 1347,637 1350,635 1355,631 1358,637 1362,652 1367,663 1370,677 1373,667 1375,668 1378,659 1384,658 1387,652 1390,647 1393,655 1398,656 1403,663 1409,656 1418,658 1420,653 1424,657 1426,653 1429,657 1433,658 1436,668 1442,675 1445,672 1451,671 1453,683 1456,695 1462,694 1465,702 1468,707 1471,696 1474,711 1478,704 1480,700 1483,707 1486,730 1490,722 1493,743 1496,762 1500,766 1504,760 1509,759 1513,763 1516,767 1520,762 1523,757 1527,759 1531,763 1534,752 1537,747 1540,733 1543,738 1546,709 1549,707 1557,708 1562,718 1566,710 1568,704 1571,706 1576,698 1580,682 1586,681 1589,675 1593,675 1596,657 1598,648 1600,649 1603,633 1607,628 1610,614 1613,621 1619,618 1622,609 1625,608 1627,602 1630,603 1633,608 1636,599 1639,603 1642,598 1646,599 1648,587 1651,609 1654,602 1657,604 1660,602 1663,609 1666,611 1672,625 1676,628 1682,628 1685,636 1688,650 1693,657 1696,682 1702,682 1704,686 1709,691 1711,640 1714,653 1717,666 1720,659 1723,677 1726,675';
const macdSlow = '81,723 91,733 110,747 135,760 153,763 168,761 184,754 198,743 222,718 245,692 265,670 286,654 302,647 318,645 335,647 351,655 376,670 396,685 416,697 437,708 461,720 490,729 523,740 555,751 580,756 600,757 616,756 640,748 660,742 681,728 701,715 722,698 740,682 762,660 783,640 803,622 824,608 840,602 852,600 869,601 885,606 905,618 926,635 950,662 967,681 987,702 1007,720 1028,730 1040,732 1052,730 1069,722 1089,705 1109,683 1130,664 1150,650 1171,646 1191,649 1207,657 1224,671 1256,696 1280,709 1300,718 1321,722 1345,722 1378,722 1398,722 1423,726 1443,733 1464,742 1484,750 1504,756 1521,758 1533,758 1545,753 1560,743 1574,728 1590,705 1607,678 1619,656 1633,636';
const macdFast = '84,764 94,770 108,773 124,770 143,758 157,743 176,720 192,698 202,683 216,665 235,650 257,638 273,635 290,640 306,652 327,670 347,685 367,698 392,713 416,719 437,727 461,736 490,743 508,752 531,759 551,761 571,761 588,755 612,742 639,727 652,722 673,707 689,690 705,670 722,651 742,629 762,611 783,601 803,594 816,592 826,594 840,602 856,615 877,628 893,647 913,671 926,685 942,706 958,725 975,739 987,744 999,743 1011,737 1032,722 1052,697 1069,673 1089,651 1109,638 1126,635 1142,640 1162,653 1187,678 1211,700 1236,715 1260,722 1280,725 1300,725 1321,722 1341,719 1362,718 1378,723 1402,735 1423,743 1443,752 1464,761 1484,765 1496,765 1511,758 1525,743 1541,720 1558,683 1574,650 1586,627 1600,602 1615,587 1625,583 1633,583';
const macdLead = '81,762 92,764 106,763 122,752 139,733 155,710 171,690 188,668 204,656 220,650 237,649 253,651 269,656 286,663 302,676 318,692 339,702 359,707 388,711 412,712 433,720 453,733 478,746 500,749 523,757 539,757 559,755 580,743 600,730 620,720 639,716 650,714 664,706 681,690 697,667 718,637 732,618 742,611 754,607 771,609 791,614 820,618 840,626 860,636 877,649 893,669 913,693 934,718 952,737 969,743 987,735 1003,717 1020,695 1040,668 1060,647 1077,639 1089,638 1105,640 1126,655 1146,673 1171,694 1191,709 1207,713 1228,711 1252,710 1280,713 1296,719 1313,718 1333,715 1349,713 1366,717 1388,732 1415,750 1443,763 1464,763 1480,761 1500,748 1521,723 1541,683 1562,632 1580,595 1592,580 1600,577 1611,582 1623,597 1633,616';

const cci = '81,850 86,850 91,847 98,860 101,867 105,887 112,903 118,914 122,917 131,927 137,932 145,932 149,926 159,921 167,919 176,922 186,925 194,928 199,926 204,918 216,902 224,890 233,882 243,871 265,869 283,860 294,847 302,837 310,829 327,829 333,833 343,842 355,852 371,857 388,865 394,877 402,900 408,920 416,937 419,915 429,902 439,893 447,877 453,855 460,838 465,847 471,856 486,860 496,865 504,883 513,910 523,937 529,953 535,963 543,969 552,969 559,962 569,947 580,936 592,930 602,928 608,931 616,935 640,935 648,940 660,939 671,943 681,949 689,951 701,948 718,942 738,937 747,930 754,927 767,915 783,895 795,890 805,884 816,872 828,858 840,858 847,861 850,856 862,857 877,840 885,826 893,813 903,803 911,801 917,812 922,823 927,831 950,831 956,829 960,840 967,840 970,838 977,845 985,858 995,882 1001,893 1009,893 1024,900 1039,898 1048,887 1054,875 1064,870 1069,857 1077,840 1085,825 1091,818 1101,817 1109,812 1118,815 1130,820 1140,825 1146,827 1171,828 1181,833 1197,831 1220,836 1232,834 1244,834 1252,838 1264,840 1273,847 1280,847 1286,843 1292,832 1298,822 1309,807 1319,796 1326,793 1333,797 1341,808 1349,818 1358,828 1368,842 1378,853 1388,861 1398,865 1409,869 1423,863 1433,862 1443,868 1455,872 1460,878 1466,890 1476,912 1486,925 1496,947 1500,963 1509,978 1521,984 1531,988 1539,983 1547,968 1558,948 1574,927 1594,903 1607,890 1619,863 1631,838 1643,821 1651,813 1660,812 1668,814 1682,825 1696,843 1709,862 1711,864 1717,865 1729,875';
const cycleBlue = '81,873 86,897 92,937 98,963 106,976 112,968 118,940 122,910 127,873 133,837 142,817 149,827 157,853 167,890 178,904 188,893 196,870 204,847 214,837 222,847 229,873 235,903 241,928 250,940 259,933 269,907 280,877 292,864 304,875 314,900 327,918 335,921 347,910 359,890 369,882 380,887 390,905 398,912 404,907 410,892 416,867 424,837 433,827 440,840 447,870 453,900 461,923 469,929 488,929 498,937 508,953 516,957 523,947 529,923 537,880 545,837 553,812 560,804 569,820 580,853 590,903 598,937 606,946 614,935 624,903 633,887 640,885 646,890 656,903 664,907 673,902 683,883 693,860 705,846 716,853 726,880 736,893 744,885 754,853 764,840 775,857 783,887 791,912 800,921 809,912 822,898 830,902 840,917 850,913 858,883 869,833 879,818 887,830 897,877 907,933 920,968 928,950 938,893 944,867 951,858 958,870 967,913 975,953 982,960 991,933 1001,887 1009,853 1018,837 1026,832 1042,841 1060,845 1071,857 1085,887 1097,918 1107,937 1116,939 1126,930 1140,903 1152,883 1164,876 1175,880 1191,889 1220,902 1240,906 1260,907 1271,895 1280,867 1288,840 1298,823 1307,833 1315,867 1323,913 1333,953 1341,964 1349,958 1362,930 1376,897 1390,867 1404,856 1417,865 1431,890 1443,913 1458,924 1470,919 1482,911 1492,917 1507,930 1517,920 1525,890 1533,853 1543,817 1553,803 1564,820 1574,853 1582,877 1590,882 1600,870 1611,852 1620,848 1627,855 1637,887 1647,930 1660,963 1670,974 1680,970 1690,958 1698,940 1705,923';
const cycleRed = '81,930 88,973 96,988 104,963 110,927 116,880 122,833 130,805 137,817 147,857 155,890 167,910 178,902 186,877 196,837 205,829 212,843 220,883 231,930 241,948 251,933 261,897 271,870 282,862 292,867 304,893 314,917 324,925 339,910 351,885 363,878 376,893 390,923 398,907 406,863 422,816 433,837 441,900 453,930 482,927 494,947 506,965 514,953 527,890 537,823 549,793 559,817 569,857 580,917 594,955 606,937 616,897 627,878 637,890 652,912 664,903 679,867 695,838 707,853 724,900 736,880 746,842 754,830 762,840 775,897 787,928 799,913 811,892 824,903 836,926 848,903 858,833 869,809 879,827 889,883 899,957 909,981 922,940 930,877 941,840 952,873 960,947 970,975 981,950 991,883 999,837 1011,827 1024,839 1044,843 1056,847 1067,870 1081,910 1093,937 1103,944 1116,933 1130,900 1144,878 1154,875 1171,881 1187,893 1203,896 1216,905 1248,909 1258,900 1271,850 1280,828 1289,812 1298,833 1307,883 1315,930 1330,974 1343,947 1358,903 1372,872 1392,854 1407,863 1421,890 1435,918 1447,929 1460,918 1474,907 1486,922 1500,937 1511,920 1521,870 1531,807 1543,795 1556,833 1568,877 1580,890 1592,863 1609,841 1617,847 1627,893 1639,943 1651,975 1662,976 1672,967 1684,960 1692,937 1700,900 1705,878';
const stoc = '84,937 90,957 98,980 106,988 176,988 200,985 212,967 233,932 245,903 257,870 269,827 280,798 290,793 302,798 316,794 333,794 343,798 355,810 369,823 382,843 392,867 402,893 416,913 429,907 437,917 445,947 453,957 463,950 486,937 498,938 508,957 520,988 612,988 631,983 652,988 671,983 693,973 711,969 722,975 732,988 740,987 749,973 758,933 767,850 773,803 777,794 913,794 920,800 932,812 946,809 956,803 969,815 981,837 995,873 1009,933 1020,982 1024,988 1052,988 1060,982 1079,930 1093,890 1109,820 1126,797 1132,794 1171,794 1181,799 1207,813 1224,840 1244,870 1260,903 1280,957 1284,972 1292,980 1304,960 1321,935 1339,930 1358,935 1368,945 1382,970 1394,978 1407,988 1574,988 1584,982 1596,963 1607,937 1619,887 1629,827 1635,798 1641,794 1690,794 1696,798 1713,823 1728,844';
const stocDots = [['cyan', 343, 800], ['cyan', 919, 800], ['cyan', 1180, 799], ['cyan', 1696, 800], ['red', 202, 983], ['red', 670, 983], ['red', 745, 980], ['red', 1060, 982], ['red', 1582, 983]];

const parse = text => text.split(' ').map(p => p.split(',').map(Number));
const line = (pts, attrs) => `<polyline points="${pts.map(p => p.join()).join(' ')}" ${attrs}/>`;
const hline = (y, x2, attrs) => `<path d="M81 ${y}.5H${x2}" ${attrs}/>`;

// smooth curve through the points
function curve(text, attrs) {
    const p = parse(text);
    let d = `M${p[0]}`;
    for (let i = 0; i < p.length - 1; i++) {
        const a = p[i - 1] || p[i], b = p[i], c = p[i + 1], e = p[i + 2] || c;
        const h = c[0] - b[0];
        const s1 = c === a ? 0 : (c[1] - a[1]) / (c[0] - a[0]);
        const s2 = e === b ? 0 : (e[1] - b[1]) / (e[0] - b[0]);
        d += `C${(b[0] + h / 3).toFixed(1)} ${(b[1] + s1 * h / 3).toFixed(1)} ${(c[0] - h / 3).toFixed(1)} ${(c[1] - s2 * h / 3).toFixed(1)} ${c}`;
    }
    return `<path d="${d}" ${attrs}/>`;
}

function valueAt(pts, x) {
    for (let i = 1; i < pts.length; i++) {
        if (x <= pts[i][0]) {
            const [x0, y0] = pts[i - 1], [x1, y1] = pts[i];
            return y0 + (y1 - y0) * (x - x0) / (x1 - x0);
        }
    }
    return pts[pts.length - 1][1];
}

function grid(y1, y2) {
    return DAYS.map((d, k) => `<path d="M${dayX(k)}.5 ${y1}V${y2}" stroke="#555" stroke-dasharray="12 3 3 3 3 3"/>`).join('');
}

function drawPrice() {
    let out = grid(109, 556);
    const wave = [];
    for (let x = 81; x <= 1726; x += 3) {
        wave.push([x, (333 - 216 * Math.cos(2 * Math.PI * (x - 342) / 266.9)).toFixed(1)]);
    }
    out += line(wave, 'stroke="#666"');

    const bars = [];
    closes.split('\n').forEach((row, k) => {
        const start = k === 0 ? FIRST : dayX(k - 1);
        row.split(' ').forEach((y, i) => bars.push([start + i * BAR, Number(y)]));
    });
    out += line(bars, 'stroke="#66f"');

    hilow.forEach(([color, text]) => {
        const pts = parse(text);
        for (let x = pts[0][0]; x <= pts[pts.length - 1][0]; x += BAR) {
            out += `<rect x="${x - 2}" y="${Math.round(valueAt(pts, x)) - 2}" width="4" height="4" fill="${color}"/>`;
        }
    });
    bars.forEach(([x, y]) => out += `<rect x="${x - 2}" y="${y - 2}" width="4" height="4" fill="cyan"/>`);

    sells.forEach(([x, y, , fx, fy]) => {
        out += `<path d="M${x - 2} ${y}h3v9h3l-4.500 7-4.500-7h3zM${fx - 1} ${fy - 4}l4 4-4 4z" fill="red"/>`;
    });
    buys.forEach(([x, y, , fx, fy]) => {
        out += `<path d="M${x - 1} ${y + 13}h2V${y + 5}h3l-4-5-4 5h3zM${fx - 1} ${fy - 4}l4 4-4 4z" fill="lime"/>`;
    });
    document.getElementById('plot1').innerHTML = out;

    const note = (text, x, y) => `<span style="left:${(x - 81) / 17.59}%;top:${(y - 90) / 4.69}%">${text}</span>`;
    document.getElementById('notes').innerHTML =
        sells.map(s => note('-1', s[0] - 1, s[2])).join('') + buys.map(b => note('1', b[0], b[2])).join('');
}

function drawLeo() {
    document.getElementById('plot2').innerHTML = grid(577, 772) +
        hline(595, 1726, 'stroke="red"') +
        hline(633, 1726, 'stroke="#660"') +
        hline(670, 1726, 'stroke="blue" stroke-dasharray="3 3"') +
        hline(695, LAST_X, 'stroke="teal"') +
        hline(707, 1726, 'stroke="#660"') +
        hline(744, 1726, 'stroke="red"') +
        curve(macdLead, 'stroke="teal"') +
        curve(macdFast, 'stroke="yellow" stroke-dasharray="4 4"') +
        curve(macdSlow, 'stroke="yellow"') +
        line(parse(leo), 'stroke="cyan"');
}

function drawCci() {
    const pts = parse(cci);
    let out = grid(793, 989);
    for (let x = FIRST; x <= LAST_X; x += BAR) {
        out += `<path d="M${x}.5 881V${Math.round(valueAt(pts, x))}" stroke="#444"/>`;
    }
    out += hline(824, LAST_X, 'stroke="#888"') + hline(938, LAST_X, 'stroke="#888"') + hline(891, LAST_X, 'stroke="purple"');
    out += curve(stoc, 'stroke="#c60" stroke-dasharray="3 3"');
    out += curve(cycleBlue, 'stroke="blue" stroke-width="2"');
    out += curve(cycleRed, 'stroke="red" stroke-dasharray="4 4"');
    // overbought part goes red, oversold part cyan
    for (let i = 1; i < pts.length; i++) {
        const y = (pts[i - 1][1] + pts[i][1]) / 2;
        const color = y < 824 ? 'red' : y > 938 ? 'cyan' : '#aaa';
        out += line([pts[i - 1], pts[i]], `stroke="${color}"`);
    }
    stocDots.forEach(([color, x, y]) => out += `<circle cx="${x}" cy="${y}" r="4" fill="${color}"/>`);
    document.getElementById('plot3').innerHTML = out;
}

// rows: [y, text, background]
function scale(id, top, height, rows) {
    document.getElementById(id).innerHTML = rows.map(([y, text, bg]) => {
        const pos = `top:${(y - top) / height * 100}%`;
        return bg ? `<span class="box" style="${pos};background:${bg}">${text}</span>`
            : `<span class="tick" style="${pos}">${text}</span>`;
    }).join('');
}

const prices = [[132, 24200], [179, 24000], [225, 23800], [272, 23600], [319, 23400], [365, 23200], [412, 23000], [458, 22800], [505, 22600]];
scale('left1', 90, 468, prices);
scale('right1', 90, 468, [...prices, [178, '24015', 'red'], [212, '23870', '#66f']]);

const leoTicks = [[614, ''], [651, ''], [689, ''], [726, ''], [763, '']];
scale('left2', 559, 215, [...leoTicks, [595, '8.00'], [633, '4.00'], [670, '0.00'], [707, '-4.00'], [744, '-8.00']]);
scale('right2', 559, 215, [...leoTicks, [598, '8.00', 'red'], [636, '4.00', '#660'], [673, '', 'blue'], [676, '-0.33', 'cyan'], [710, '-4.00', '#660'], [747, '-8.00', 'red']]);

scale('left3', 775, 215, [[807, ''], [829, '150.00'], [849, ''], [870, '50.00'], [912, '50.00'], [954, '-150....'], [974, ''], [894, '0.00', 'purple'], [881, '29.05', 'red'], [926, '-78.02', 'blue']]);
scale('right3', 775, 215, [[809, '150.00'], [857, '50.00'], [906, '-50.00'], [954, '-150.00'], [976, ''], [827, '120.00', '#808080'], [879, '10.21', '#999'], [941, '-120.00', '#808080']]);

function drawDates() {
    const left = x => `left:${(x - 2) / 19.16}%`;
    let out = '';
    DAYS.forEach((d, k) => out += `<span style="${left(dayX(k) + 7)}">${d}</span>`);
    [85, 154, 223, 292, 430, 499, 568, 637, 706, 775, 844, 913, 982, 1051, 1120, 1189, 1258, 1327, 1396, 1465, 1534, 1672, 1741, 1810]
        .forEach(x => out += `<i style="${left(x)}"></i>`);
    [0, 2, 4, 6, 7, 9, 11, 13, 14, 15].forEach(k => out += `<i class="day" style="${left(dayX(k))}"></i>`);
    document.getElementById('dates').innerHTML = out;
}

function drawTabs() {
    const names = ['STOX_TF60', 'STOX_TF120', 'STOX TF240', 'STOX _100', 'STOX_TF30', 'FIB_TF60', 'FIB_TF120', 'FIB TF240', 'FIB_100', 'FIB_TF30', 'BUND vs STOXX', 'FIB Frame bassi', 'FIB Giornaliero', 'STOXX frame bassi', 'STOXX giornaliero', 'No PREZZI', 'ANNUALE Indici', 'Untitled Workspace:&nbsp; 5'];
    const edge = d => `<svg class="edge"><path d="${d}" fill="none" stroke="#000"/></svg>`;
    let out = edge('M0 0l5 15.500h1');
    names.forEach((name, i) => {
        const last = i === names.length - 1;
        out += `<button class="tab${last ? ' active' : ''}">${name}</button>`;
        out += edge(last ? 'M6 0L1 15.500H0' : 'M0 0l5 15.500h1M3 8L1 15.500H0');
    });
    document.getElementById('tabs').insertAdjacentHTML('beforeend', out);
}

drawPrice();
drawLeo();
drawCci();
drawDates();
drawTabs();
```
